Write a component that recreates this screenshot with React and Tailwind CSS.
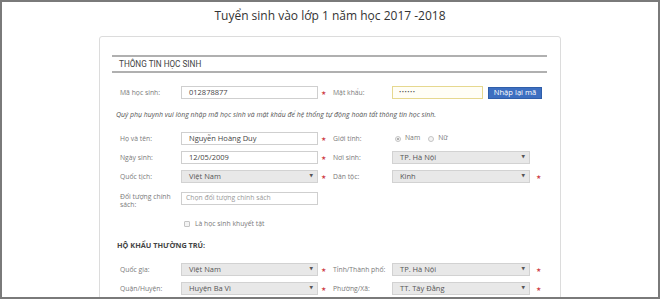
import React from 'react';

const Star = ({ className = '' }) => (
  <span className={`text-[6px] leading-none text-[#d0454c] font-['DejaVu_Sans'] ${className}`}>★</span>
);

const TextInput = ({ value, placeholder, className = 'w-[137px]' }) => (
  <div className={`${className} h-[13px] border border-[#cfcfcf] bg-white flex items-center ${value ? 'px-[7px] text-[7.5px] text-[#444]' : 'px-[4px] text-[6.8px] text-[#999]'}`}>
    {value || placeholder}
  </div>
);

const Select = ({ value, className = 'w-[137px]' }) => (
  <div className={`${className} h-[13px] border border-[#d2d2d2] bg-[#e8e8e8] flex items-center justify-between pl-[7px] pr-[4px] text-[7.5px] text-[#555]`}>
    <span>{value}</span>
    <span className="text-[4.5px] text-[#555] font-['DejaVu_Sans']">▼</span>
  </div>
);

const Label = ({ children, className = 'w-[61px]' }) => (
  <div className={`${className} text-[6.8px] text-[#7a7a7a] leading-[8px] shrink-0 whitespace-nowrap`}>{children}</div>
);

const StarCell = () => (
  <div className="w-[15px] pl-[3px] flex items-center"><Star /></div>
);

export default function App() {
  return (
    <div className="w-[660px] h-[299px] border-2 border-[#7a7a7a] overflow-hidden bg-white font-['Open_Sans',sans-serif]">
      {/* Title */}
      <div className="pt-[6px] h-[22px] text-center text-[12px] leading-[16px] text-[#333]">
        Tuyển sinh vào lớp 1 năm học 2017 -2018
      </div>

      {/* Card */}
      <div className="mt-[12px] ml-[97px] w-[462px] h-[300px] border border-[#dcdcdc] rounded-[3px] pt-[18px]">
        <div className="ml-[12px] w-[435px] h-[18px] border-y-2 border-[#b0b0b0] flex items-center pl-[7px] text-[8.2px] text-[#444] font-['Roboto',sans-serif]">
          THÔNG TIN HỌC SINH
        </div>

        {/* Mã học sinh */}
        <div className="mt-[13px] pl-[20px] flex items-center h-[13px]">
          <Label>Mã học sinh:</Label>
          <TextInput value="012878877" />
          <StarCell />
          <Label className="w-[59px]">Mật khẩu:</Label>
          <div className="w-[91px] h-[13px] border border-[#e6d88f] bg-[#fffef6] flex items-center px-[6px] text-[6px] text-[#555] tracking-[0.5px]">••••••</div>
          <div className="ml-[5px] w-[54px] h-[12px] bg-[#3d6fc1] border border-[#2f5ea9] text-white text-[7.6px] flex items-center justify-center">
            Nhập lại mã
          </div>
        </div>

        <div className="mt-[11px] pl-[16px] h-[10px] flex items-center text-[6.95px] italic text-[#555] whitespace-nowrap">
          Quý phụ huynh vui lòng nhập mã học sinh và mật khẩu để hệ thống tự động hoàn tất thông tin học sinh.
        </div>

        {/* Họ và tên */}
        <div className="mt-[12px] pl-[20px] flex items-center h-[13px]">
          <Label>Họ và tên:</Label>
          <TextInput value="Nguyễn Hoàng Duy" />
          <StarCell />
          <Label className="w-[59px]">Giới tính:</Label>
          <div className="flex items-center text-[6.8px] text-[#7a7a7a]">
            <span className="ml-[3px] w-[6px] h-[6px] rounded-full border border-[#c4c4c4] bg-[#f4f4f4] flex items-center justify-center">
              <span className="w-[2px] h-[2px] rounded-full bg-[#999]"></span>
            </span>
            <span className="ml-[4px]">Nam</span>
            <span className="ml-[8px] w-[6px] h-[6px] rounded-full border border-[#c4c4c4] bg-[#f4f4f4]"></span>
            <span className="ml-[4px]">Nữ</span>
          </div>
        </div>

        {/* Ngày sinh */}
        <div className="mt-[6px] pl-[20px] flex items-center h-[13px]">
          <Label>Ngày sinh:</Label>
          <TextInput value="12/05/2009" />
          <StarCell />
          <Label className="w-[59px]">Nơi sinh:</Label>
          <Select value="TP. Hà Nội" className="w-[138px]" />
        </div>

        {/* Quốc tịch */}
        <div className="mt-[6px] pl-[20px] flex items-center h-[13px]">
          <Label>Quốc tịch:</Label>
          <Select value="Việt Nam" />
          <StarCell />
          <Label className="w-[59px]">Dân tộc:</Label>
          <Select value="Kinh" className="w-[138px]" />
          <Star className="ml-[6px]" />
        </div>

        {/* Đối tượng chính sách */}
        <div className="mt-[9px] pl-[20px] flex items-start">
          <Label className="w-[61px] pt-[1px]">Đối tượng chính<br />sách:</Label>
          <TextInput placeholder="Chọn đối tượng chính sách" />
        </div>

        <div className="mt-[10px] pl-[84px] h-[10px] flex items-center text-[6.8px] text-[#7a7a7a]">
          <span className="w-[6px] h-[6px] border border-[#c4c4c4] bg-[#f4f4f4] rounded-[1px]"></span>
          <span className="ml-[5px]">Là học sinh khuyết tật</span>
        </div>

        <div className="mt-[11px] pl-[17px] h-[10px] flex items-center text-[7.3px] font-bold text-[#444]">
          HỘ KHẨU THƯỜNG TRÚ:
        </div>

        {/* Quốc gia */}
        <div className="mt-[13px] pl-[20px] flex items-center h-[13px]">
          <Label>Quốc gia:</Label>
          <Select value="Việt Nam" />
          <StarCell />
          <Label className="w-[59px]">Tỉnh/Thành phố:</Label>
          <Select value="TP. Hà Nội" className="w-[138px]" />
          <Star className="ml-[6px]" />
        </div>

        {/* Quận/Huyện */}
        <div className="mt-[6px] pl-[20px] flex items-center h-[13px]">
          <Label>Quận/Huyện:</Label>
          <Select value="Huyện Ba Vì" />
          <StarCell />
          <Label className="w-[59px]">Phường/Xã:</Label>
          <Select value="TT. Tây Đằng" className="w-[138px]" />
          <Star className="ml-[6px]" />
        </div>
      </div>
    </div>
  );
}
